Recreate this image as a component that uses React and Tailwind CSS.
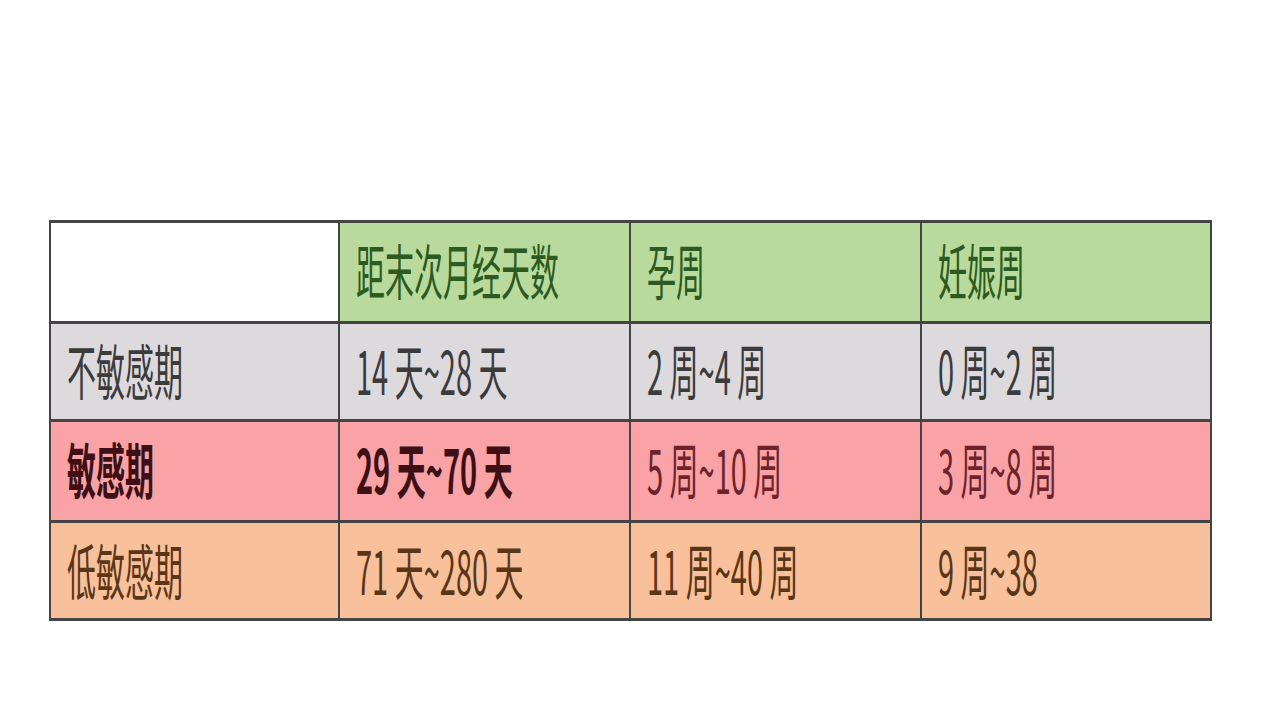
import React from 'react';

const rows = [
  {
    bg: 'bg-[#dddadd]',
    text: 'text-[#3b3b3b]',
    cells: ['不敏感期', '14 天~28 天', '2 周~4 周', '0 周~2 周'],
    bold: [false, false, false, false],
  },
  {
    bg: 'bg-[#f9a3a7]',
    text: 'text-[#6e232a]',
    cells: ['敏感期', '29 天~70 天', '5 周~10 周', '3 周~8 周'],
    bold: [true, true, false, false],
  },
  {
    bg: 'bg-[#f9c19b]',
    text: 'text-[#5b3616]',
    cells: ['低敏感期', '71 天~280 天', '11 周~40 周', '9 周~38'],
    bold: [false, false, false, false],
  },
];

const header = ['距末次月经天数', '孕周', '妊娠周'];

const Cell = ({ children, className = '', bold = false }) => (
  <div className={`flex items-center pl-[16px] pb-[5px] ${className}`}>
    <span
      className={`inline-block origin-center scale-y-[2.08] text-[29px] leading-none whitespace-pre ${bold ? 'font-bold text-[#3e0f14]' : 'font-normal'}`}
    >
      {children}
    </span>
  </div>
);

const App = () => {
  return (
    <div
      className="w-[1265px] h-[705px] bg-white pt-[220px] pl-[49px]"
      style={{ fontFamily: '"Noto Sans CJK SC", "Noto Sans", sans-serif' }}
    >
      <div className="grid w-[1163px] grid-cols-[287px_289px_289px_288px] grid-rows-[98px_95px_98px_95px] gap-x-[2px] gap-y-[3px] bg-[#444444] p-[3px] pl-[2px] pr-[2px]">
        {/* header */}
        <div className="bg-white" />
        {header.map((h) => (
          <Cell key={h} className="bg-[#b8da9d] text-[#2c5a20]">
            {h}
          </Cell>
        ))}

        {/* body */}
        {rows.map((row) =>
          row.cells.map((c, i) => (
            <Cell key={c} className={`${row.bg} ${row.text}`} bold={row.bold[i]}>
              {c}
            </Cell>
          ))
        )}
      </div>
    </div>
  );
};

export default App;
